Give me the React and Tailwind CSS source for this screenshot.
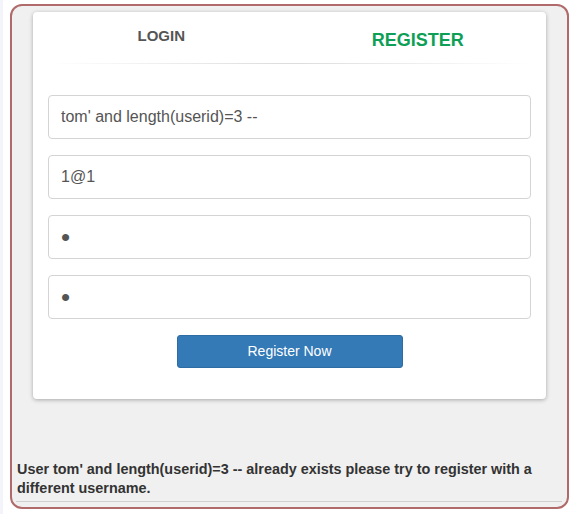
import { useState } from 'react';

export default function App() {
  const [tab] = useState('register');

  return (
    <div className="min-h-[514px] bg-white pt-[4px] pl-[10px] pr-[7px] font-['Liberation_Sans',Arial,sans-serif] border-l-[3px] border-[#f3f4f9]">
      {/* Outer panel */}
      <div className="w-[559px] -ml-[3px] h-[505px] rounded-[12px] border-2 border-[#b06a6a] bg-[#f0f0f0] flex flex-col">
        {/* Card */}
        <div className="ml-[21px] mt-[6px] w-[513px] rounded-[4px] bg-white shadow-[0_1px_4px_rgba(0,0,0,0.3)] px-[15px] pb-[31px]">
          <div className="grid grid-cols-2 h-[51px] -mx-[15px]">
            <div className="flex justify-center pt-[16px]">
              <span className="text-[15px] font-bold text-[#555] leading-none">LOGIN</span>
            </div>
            <div className="flex justify-center pt-[19px]">
              <span className={`text-[18px] font-bold leading-none ${tab === 'register' ? 'text-[#0d9f55]' : 'text-[#555]'}`}>REGISTER</span>
            </div>
          </div>
          <div className="h-px bg-gradient-to-r from-white via-[#dcdcdc] to-white" />

          {/* Fields */}
          <div className="flex flex-col gap-[16px] mt-[31px]">
            <input
              readOnly
              type="text"
              value="tom' and length(userid)=3 --"
              className="h-[44px] w-full rounded-[4px] border border-[#d4d4d4] px-[12px] text-[16px] text-[#555] outline-none font-['Liberation_Sans',Arial,sans-serif]"
            />
            <input
              readOnly
              type="text"
              value="1@1"
              className="h-[44px] w-full rounded-[4px] border border-[#d4d4d4] px-[12px] text-[16px] text-[#555] outline-none font-['Liberation_Sans',Arial,sans-serif]"
            />
            <input
              readOnly
              type="password"
              value="a"
              className="h-[44px] w-full rounded-[4px] border border-[#d4d4d4] px-[12px] text-[26px] text-[#555] outline-none font-['Liberation_Sans',Arial,sans-serif]"
            />
            <input
              readOnly
              type="password"
              value="a"
              className="h-[44px] w-full rounded-[4px] border border-[#d4d4d4] px-[12px] text-[26px] text-[#555] outline-none font-['Liberation_Sans',Arial,sans-serif]"
            />
          </div>

          <div className="flex justify-center mt-[16px]">
            <button className="w-[226px] h-[33px] rounded-[3px] border border-[#2e6da4] bg-[#337ab7] text-white text-[14px]">
              Register Now
            </button>
          </div>
        </div>

        {/* Message */}
        <div className="mt-auto px-[5px] pb-[5px]">
          <p className="text-[14.4px] font-bold text-[#333] leading-[19px]">
            User tom' and length(userid)=3 -- already exists please try to register with a different username.
          </p>
          <div className="mt-[3px] h-px bg-[#cfcfcf] ml-[-1px]" />
        </div>
      </div>
    </div>
  );
}
